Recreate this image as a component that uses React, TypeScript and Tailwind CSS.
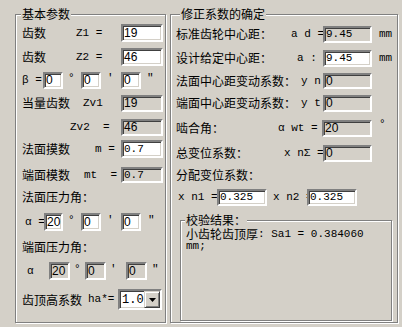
import React from 'react'

const cjk = "font-['Noto_Sans_CJK_SC',sans-serif] text-[12px] leading-none whitespace-pre text-black"
const lat = "font-['Liberation_Mono',monospace] text-[11px] leading-none whitespace-pre text-black"

function Edit({ className, value, gray, mono }: { className: string; value: string; gray?: boolean; mono?: boolean }) {
  return (
    <div
      className={`${className} flex shrink-0 items-center pl-[1px] border-2 border-t-[#808080] border-l-[#808080] border-r-white border-b-white shadow-[inset_1px_1px_0_#404040,inset_-1px_-1px_0_#d4d0c8] ${
        gray ? 'bg-[#d4d0c8]' : 'bg-white'
      } ${mono ? "font-['Liberation_Mono',monospace] text-[11px]" : "font-['Liberation_Sans',sans-serif] text-[12px]"} leading-none text-black`}
    >
      {value}
    </div>
  )
}

function Group({ title, className, titleClass, children }: { title: string; className: string; titleClass: string; children: React.ReactNode }) {
  return (
    <div className={`relative border border-[#808080] shadow-[inset_1px_1px_0_#fff,1px_1px_0_#fff] ${className}`}>
      <span className={`absolute top-[-7px] bg-[#d4d0c8] px-[1px] ${cjk} ${titleClass}`}>{title}</span>
      {children}
    </div>
  )
}

function Combo() {
  return (
    <div className="flex h-[21px] w-[44px] shrink-0 border-2 border-t-[#808080] border-l-[#808080] border-r-white border-b-white bg-white shadow-[inset_1px_1px_0_#404040,inset_-1px_-1px_0_#d4d0c8]">
      <div className={`flex flex-1 items-center pl-[2px] ${lat} text-[12px]`}>1.0</div>
      <div className="flex w-[16px] items-center justify-center border border-t-[#d4d0c8] border-l-[#d4d0c8] border-r-[#404040] border-b-[#404040] bg-[#d4d0c8] shadow-[inset_1px_1px_0_#fff,inset_-1px_-1px_0_#808080]">
        <svg width="7" height="4" viewBox="0 0 7 4">
          <path d="M0 0h7L3.5 4z" fill="#000" />
        </svg>
      </div>
    </div>
  )
}

export default function App() {
  return (
    <div className="flex h-[327px] w-[402px] gap-[4px] bg-[#d4d0c8] pl-[15px] pt-[14px]">
      {/* 基本参数 */}
      <Group title="基本参数" className="h-[309px] w-[151px] pl-[6px]" titleClass="left-[5px]">
        <div className="flex flex-col">
          <div className="mt-[9px] flex h-[18px] items-center">
            <span className={`${cjk} w-[54px]`}>齿数</span>
            <span className={`${lat} w-[45px]`}>Z1 =</span>
            <Edit className="h-[18px] w-[42px]" value="19" />
          </div>
          <div className="mt-[6px] flex h-[18px] items-center">
            <span className={`${cjk} w-[54px]`}>齿数</span>
            <span className={`${lat} w-[45px]`}>Z2 =</span>
            <Edit className="h-[18px] w-[42px]" value="46" />
          </div>
          <div className="mt-[5px] flex h-[18px] items-center">
            <span className={`${lat} w-[21px]`}>β =</span>
            <Edit className="h-[17px] w-[20px]" value="0" />
            <span className={`${lat} w-[18px] self-start pl-[5px] pt-[2px]`}>°</span>
            <Edit className="h-[17px] w-[20px]" value="0" />
            <span className={`${lat} w-[20px] self-start pl-[6px] pt-[2px]`}>′</span>
            <Edit className="h-[17px] w-[20px]" value="0" />
            <span className={`${lat} self-start pl-[6px] pt-[2px]`}>″</span>
          </div>
          <div className="mt-[5px] flex h-[18px] items-center">
            <span className={`${cjk} w-[61px]`}>当量齿数</span>
            <span className={`${lat} w-[38px]`}>Zv1</span>
            <Edit className="h-[17px] w-[42px]" value="19" gray />
          </div>
          <div className="mt-[6px] flex h-[18px] items-center">
            <span className="w-[48px]" />
            <span className={`${lat} w-[51px]`}>Zv2  =</span>
            <Edit className="h-[17px] w-[42px]" value="46" gray />
          </div>
          <div className="mt-[4px] flex h-[18px] items-center">
            <span className={`${cjk} w-[73px]`}>法面摸数</span>
            <span className={`${lat} w-[26px]`}>m =</span>
            <Edit className="h-[18px] w-[42px]" value="0.7" mono />
          </div>
          <div className="mt-[8px] flex h-[18px] items-center">
            <span className={`${cjk} w-[62px]`}>端面模数</span>
            <span className={`${lat} w-[37px]`}>mt  =</span>
            <Edit className="h-[16px] w-[42px]" value="0.7" gray mono />
          </div>
          <div className="mt-[4px] flex h-[18px] items-center">
            <span className={cjk}>法面压力角：</span>
          </div>
          <div className="mt-[7px] flex h-[18px] items-center">
            <span className={`${lat} w-[22px] pl-[3px]`}>α =</span>
            <Edit className="h-[18px] w-[19px]" value="20" />
            <span className={`${lat} w-[18px] self-start pl-[5px] pt-[2px]`}>°</span>
            <Edit className="h-[18px] w-[20px]" value="0" />
            <span className={`${lat} w-[20px] self-start pl-[6px] pt-[2px]`}>′</span>
            <Edit className="h-[18px] w-[20px]" value="0" />
            <span className={`${lat} self-start pl-[7px] pt-[2px]`}>″</span>
          </div>
          <div className="mt-[7px] flex h-[18px] items-center">
            <span className={cjk}>端面压力角：</span>
          </div>
          <div className="mt-[6px] flex h-[18px] items-center">
            <span className={`${lat} w-[27px] pl-[5px]`}>α</span>
            <Edit className="h-[18px] w-[21px]" value="20" gray />
            <span className={`${lat} w-[15px] self-start pl-[4px] pt-[2px]`}>°</span>
            <Edit className="h-[18px] w-[21px]" value="0" gray />
            <span className={`${lat} w-[20px] self-start pl-[4px] pt-[2px]`}>′</span>
            <Edit className="h-[18px] w-[21px]" value="0" gray />
            <span className={`${lat} self-start pl-[5px] pt-[2px]`}>″</span>
          </div>
          <div className="mt-[9px] flex h-[21px] items-center">
            <span className={`${cjk} w-[66px]`}>齿顶高系数</span>
            <span className={`${lat} w-[30px]`}>ha*=</span>
            <Combo />
          </div>
        </div>
      </Group>

      {/* 修正系数的确定 */}
      <Group title="修正系数的确定" className="h-[309px] w-[228px] pl-[5px]" titleClass="left-[9px]">
        <div className="flex flex-col">
          <div className="mt-[10px] flex h-[18px] items-center">
            <span className={`${cjk} w-[115px]`}>标准齿轮中心距：</span>
            <span className={`${lat} w-[32px]`}>a d =</span>
            <Edit className="h-[17px] w-[49px]" value="9.45" gray mono />
            <span className={`${lat} pl-[7px]`}>mm</span>
          </div>
          <div className="mt-[6px] flex h-[18px] items-center">
            <span className={`${cjk} w-[121px]`}>设计给定中心距：</span>
            <span className={`${lat} w-[26px]`}>a :</span>
            <Edit className="h-[17px] w-[49px]" value="9.45" mono />
            <span className={`${lat} pl-[7px]`}>mm</span>
          </div>
          <div className="mt-[5px] flex h-[18px] items-center">
            <span className={`${cjk} w-[125px]`}>法面中心距变动系数：</span>
            <span className={`${lat} w-[22px]`}>y n</span>
            <Edit className="h-[16px] w-[49px]" value="0" gray />
          </div>
          <div className="mt-[4px] flex h-[18px] items-center">
            <span className={`${cjk} w-[125px]`}>端面中心距变动系数：</span>
            <span className={`${lat} w-[22px]`}>y t</span>
            <Edit className="h-[17px] w-[49px]" value="0" gray />
          </div>
          <div className="mt-[7px] flex h-[18px] items-center">
            <span className={`${cjk} w-[102px]`}>啮合角：</span>
            <span className={`${lat} w-[44px]`}>α wt =</span>
            <Edit className="h-[17px] w-[50px]" value="20" gray />
            <span className={`${lat} self-start pl-[7px]`}>°</span>
          </div>
          <div className="mt-[7px] flex h-[18px] items-center">
            <span className={`${cjk} w-[108px]`}>总变位系数：</span>
            <span className={`${lat} w-[39px]`}>x nΣ =</span>
            <Edit className="h-[17px] w-[49px]" value="0" gray />
          </div>
          <div className="mt-[4px] flex h-[18px] items-center">
            <span className={cjk}>分配变位系数：</span>
          </div>
          <div className="mt-[4px] flex h-[18px] items-center">
            <span className={`${lat} w-[41px] pl-[2px]`}>x n1 =</span>
            <Edit className="h-[17px] w-[50px]" value="0.325" mono />
            <span className={`${lat} w-[40px] pl-[6px]`}>x n2 =</span>
            <Edit className="h-[17px] w-[50px]" value="0.325" mono />
          </div>

          {/* 校验结果 */}
          <Group title="校验结果：" className="ml-[4px] mt-[14px] h-[101px] w-[212px] pl-[5px] pt-[7px]" titleClass="left-[4px]">
            <div className="flex flex-col">
              <div className="flex h-[12px] items-center">
                <span className={cjk}>小齿轮齿顶厚</span>
                <span className={`${lat} text-[10px]`}>: Sa1 = 0.384060</span>
              </div>
              <div className="flex h-[12px] items-center">
                <span className={`${lat} text-[10px]`}>mm;</span>
              </div>
            </div>
          </Group>
        </div>
      </Group>
    </div>
  )
}
